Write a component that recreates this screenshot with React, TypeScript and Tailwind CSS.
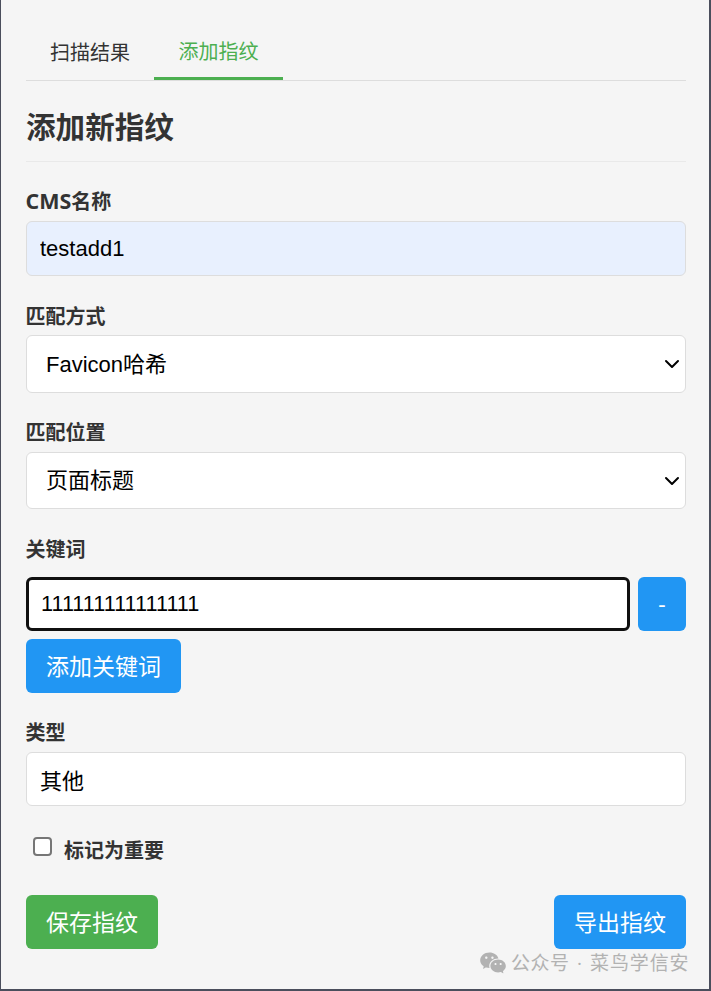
import { ChevronDown } from "lucide-react";
import { RiWechatFill } from "react-icons/ri";

const cjk = { fontFamily: '"Liberation Sans", "Noto Sans CJK SC", sans-serif' };
const ui = { fontFamily: '"Open Sans", "Noto Sans CJK SC", sans-serif' };

function Label({ children, className = "" }: { children: React.ReactNode; className?: string }) {
  return <label className={`block -ml-[0.5px] text-[20px] leading-[28px] font-bold text-[#333333] ${className}`}>{children}</label>;
}

function Select({ value, className = "" }: { value: string; className?: string }) {
  return (
    <div className={`relative ${className}`}>
      <select
        defaultValue={value}
        style={cjk}
        className="appearance-none block w-full h-full rounded-[6px] border border-[#dddddd] bg-white pl-[19px] text-[22px] text-black outline-none"
      >
        <option>{value}</option>
      </select>
      <ChevronDown className="absolute right-[2px] top-1/2 -translate-y-1/2 w-[24px] h-[24px] text-black pointer-events-none" strokeWidth={2} />
    </div>
  );
}

export default function App() {
  return (
    <div className="w-[711px] h-[991px] bg-[#4a4e5c] pl-[1px] pr-[2px] pb-[2px] overflow-hidden" style={ui}>
      <div className="relative w-full h-full bg-[#f5f5f5] pl-[25px] pr-[23px]">
        <div className="flex h-[81px] border-b border-[#dddddd] pt-[24px]">
          <div className="w-[128px] h-[56px] pt-[2px] flex items-center justify-center text-[20px] text-[#333333]">扫描结果</div>
          <div className="w-[129px] h-[56px] pt-[2px] flex items-center justify-center text-[20px] text-[#4caf50] border-b-[3px] border-[#4caf50]">添加指纹</div>
        </div>

        <h2 className="h-[81px] pt-[23px] pb-[8px] border-b border-[#e9e9e9] text-[29.6px] leading-[46px] font-bold text-[#333333]">添加新指纹</h2>

        <Label className="mt-[25px]"><span className="text-[21.5px] leading-[28px]">CMS</span>名称</Label>
        <input
          readOnly
          value="testadd1"
          style={cjk}
          className="block mt-[5px] w-full h-[55px] rounded-[6px] border border-[#dddddd] bg-[#e8f0fe] px-[13px] text-[22px] text-black outline-none"
        />

        <Label className="mt-[27px]">匹配方式</Label>
        <Select value="Favicon哈希" className="mt-[4px] h-[58px]" />

        <Label className="mt-[26px]">匹配位置</Label>
        <Select value="页面标题" className="mt-[5px] h-[57px]" />

        <Label className="mt-[27px]">关键词</Label>
        <div className="flex gap-[8px] mt-[13px]">
          <input
            readOnly
            value="111111111111111"
            style={cjk}
            className="flex-1 min-w-0 h-[54px] rounded-[6px] border-[3px] border-[#101010] bg-white px-[12px] text-[21.7px] text-black outline-none"
          />
          <button className="w-[48px] h-[54px] rounded-[6px] bg-[#2196f3] text-white text-[23px]">-</button>
        </div>
        <button className="block mt-[8px] w-[155px] h-[54px] rounded-[6px] bg-[#2196f3] text-white text-[23px]">添加关键词</button>

        <Label className="mt-[26px]">类型</Label>
        <input
          readOnly
          value="其他"
          style={cjk}
          className="block mt-[5px] w-full h-[54px] rounded-[6px] border border-[#dddddd] bg-white px-[13px] text-[22px] text-black outline-none"
        />

        <div className="flex items-center mt-[29px] h-[30px]">
          <input type="checkbox" className="appearance-none ml-[7px] mr-[12px] -mt-[8px] w-[19px] h-[19px] rounded-[4px] border-2 border-[#767676] bg-white" />
          <Label className="mt-[2px] ml-0">标记为重要</Label>
        </div>

        <div className="flex justify-between mt-[30px]">
          <button className="w-[132px] h-[54px] rounded-[6px] bg-[#4caf50] text-white text-[23px]">保存指纹</button>
          <button className="w-[132px] h-[54px] rounded-[6px] bg-[#2196f3] text-white text-[23px]">导出指纹</button>
        </div>

        <div className="absolute left-[478px] top-[949px] flex items-center text-[#b2b2b2] text-[19px] leading-[26px] tracking-[0.5px] whitespace-nowrap">
          <RiWechatFill className="w-[28px] h-[28px] mr-[4px]" />
          <span>公众号</span>
          <span className="mx-[7.5px]">·</span>
          <span className="tracking-[0.9px]">菜鸟学信安</span>
        </div>
      </div>
    </div>
  );
}
